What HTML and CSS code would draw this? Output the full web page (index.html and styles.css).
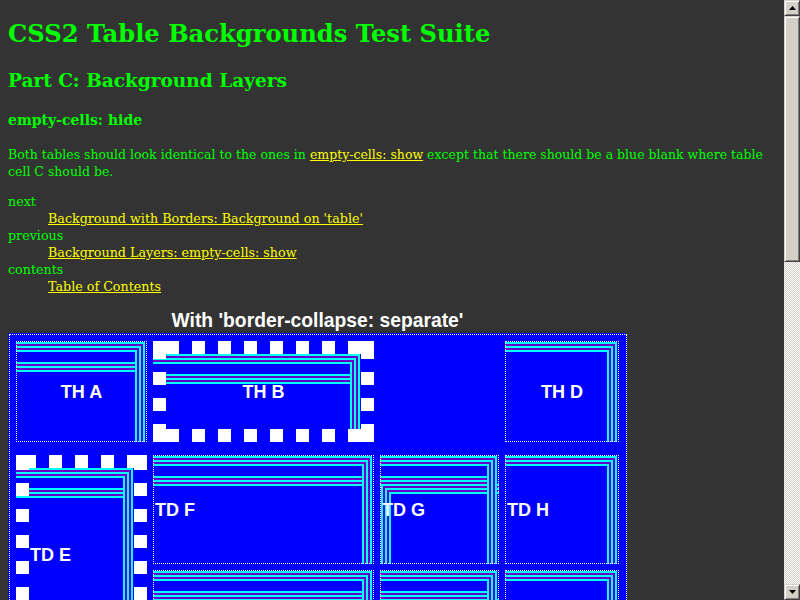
FILE: index.html
```html
<!DOCTYPE html>
<html lang="en">
<head>
<meta charset="utf-8">
<title>CSS2 Table Backgrounds Test Suite: Part C</title>
<link rel="stylesheet" href="styles.css">
</head>
<body>
<div class="page">
  <h1>CSS2 Table Backgrounds Test Suite</h1>
  <h2>Part C: Background Layers</h2>
  <h3>empty-cells: hide</h3>
  <p class="intro">Both tables should look identical to the ones in <a href="#">empty-cells: show</a> except that there should be a blue blank where table cell C should be.</p>
  <dl class="nav">
    <dt>next</dt>
    <dd><a href="#">Background with Borders: Background on 'table'</a></dd>
    <dt>previous</dt>
    <dd><a href="#">Background Layers: empty-cells: show</a></dd>
    <dt>contents</dt>
    <dd><a href="#">Table of Contents</a></dd>
  </dl>
  <div class="tablewrap">
    <div class="caption">With 'border-collapse: separate'</div>
    <div class="grid">
      <div class="cell th thA">TH A</div>
      <div class="cell th thB">TH B</div>
      <div class="cell th empty"></div>
      <div class="cell th thD">TH D</div>
      <div class="cell td tdE">TD E</div>
      <div class="cell td tdF">TD F</div>
      <div class="cell td tdG">TD G</div>
      <div class="cell td tdH">TD H</div>
      <div class="cell td tdI"></div>
      <div class="cell td tdJ"></div>
      <div class="cell td tdK"></div>
    </div>
  </div>
</div>
<div class="scrollbar">
  <div class="sb-btn"><svg width="7" height="4" viewBox="0 0 7 4"><polygon points="3.5,0 7,4 0,4" fill="#000"/></svg></div>
  <div class="sb-thumb"></div>
  <div class="sb-track"></div>
  <div class="sb-btn"><svg width="7" height="4" viewBox="0 0 7 4"><polygon points="0,0 7,0 3.5,4" fill="#000"/></svg></div>
</div>
</body>
</html>
```

FILE: styles.css
```css
:root {
  --m: url("data:image/svg+xml,<svg xmlns='http://www.w3.org/2000/svg' width='600' height='400'><g fill='none' stroke-width='2' shape-rendering='crispEdges'><path d='M0 1H599V400' stroke='cyan'/><path d='M0 3H597V400' stroke='%236600cc'/><path d='M0 5H595V400' stroke='cyan'/><path d='M0 7H593V400' stroke='%236600cc'/><path d='M0 9H591V400' stroke='cyan'/></g></svg>");
  --ml: url("data:image/svg+xml,<svg xmlns='http://www.w3.org/2000/svg' width='600' height='400'><g fill='none' stroke-width='2' shape-rendering='crispEdges'><path d='M1 400V1H600' stroke='cyan'/><path d='M3 400V3H600' stroke='%236600cc'/><path d='M5 400V5H600' stroke='cyan'/><path d='M7 400V7H600' stroke='%236600cc'/><path d='M9 400V9H600' stroke='cyan'/></g></svg>");
  --w: linear-gradient(#fff, #fff);
}

html, body {
  margin: 0;
  height: 600px;
  overflow: hidden;
  background: #333333;
}

body {
  display: flex;
}

.page {
  flex: 1;
  min-width: 0;
  padding: 0 8px;
  color: #00ff00;
  font-family: "DejaVu Serif", serif;
}

h1 {
  margin: 19px 0 0;
  font-size: 24.2px;
  line-height: 30px;
  font-weight: bold;
}

h2 {
  margin: 21px 0 0;
  font-size: 18.5px;
  line-height: 22px;
  font-weight: bold;
}

h3 {
  margin: 20px 0 0;
  font-size: 14px;
  line-height: 17px;
  font-weight: bold;
}

.intro {
  margin: 17px 0 0;
  font-size: 12.5px;
  line-height: 17px;
}

a {
  color: #ffff00;
  text-decoration: underline;
}

.nav {
  margin: 13px 0 0;
  font-size: 12.7px;
  line-height: 17px;
}

.nav dd {
  margin: 0 0 0 40px;
}

.tablewrap {
  width: fit-content;
  margin-top: 15px;
}

.caption {
  text-align: center;
  color: #ffffff;
  font: bold 19.3px/22px "Liberation Sans", Arial, sans-serif;
  margin-bottom: 2px;
}

.grid {
  display: grid;
  grid-template-columns: 131px 221px 119px 114px;
  grid-template-rows: 101px 1px 109px 85px;
  gap: 6px;
  padding: 6px 7px 6px 6px;
  margin-left: 1px;
  border: 1px dotted #ffffff;
  background: #0000ff;
  box-shadow: -1px -1px 0 0 #0000ff;
}

.cell {
  box-sizing: border-box;
  display: flex;
  align-items: center;
  padding: 0 1px;
  border: 1px dotted #ffffff;
  color: #ffffff;
  font: bold 18px/22px "Liberation Sans", Arial, sans-serif;
  background-repeat: no-repeat;
}

.th {
  grid-row: 1;
  justify-content: center;
}

.empty {
  border: none;
}

.td {
  justify-content: flex-start;
}

.thA {
  background:
    var(--m) right 1px top 0 / 600px 400px no-repeat,
    var(--m) right 1px top 20px / 600px 400px no-repeat;
}

.thB {
  border: 13px solid transparent;
  background:
    var(--w) left top / 13px 13px no-repeat border-box,
    var(--w) right top / 13px 13px no-repeat border-box,
    var(--w) left bottom / 13px 13px no-repeat border-box,
    var(--w) right bottom / 13px 13px no-repeat border-box,
    linear-gradient(90deg, transparent 13px, #fff 13px) left 0 top 0 / 26px 13px repeat-x border-box,
    linear-gradient(90deg, transparent 13px, #fff 13px) left 0 bottom 0 / 26px 13px repeat-x border-box,
    linear-gradient(180deg, transparent 5px, #fff 5px 18px, transparent 18px) left 0 top 0 / 13px 26px repeat-y border-box,
    linear-gradient(180deg, transparent 5px, #fff 5px 18px, transparent 18px) right 0 top 0 / 13px 26px repeat-y border-box,
    var(--m) right 1px top 0 / 600px 400px no-repeat padding-box,
    var(--m) right 1px top 20px / 600px 400px no-repeat padding-box;
  background-clip: border-box;
}

.thD {
  background: var(--m) right 1px top 0 / 600px 400px no-repeat;
}

.tdE {
  grid-column: 1;
  grid-row: 3 / span 2;
  padding-left: 1px;
  border: 13px solid transparent;
  background:
    var(--w) left top / 13px 13px no-repeat border-box,
    var(--w) right top / 13px 13px no-repeat border-box,
    linear-gradient(90deg, transparent 7px, #fff 7px 20px, transparent 20px) left 0 top 0 / 26px 13px repeat-x border-box,
    linear-gradient(180deg, transparent 2px, #fff 2px 15px, transparent 15px) left 0 top 0 / 13px 26px repeat-y border-box,
    linear-gradient(180deg, transparent 2px, #fff 2px 15px, transparent 15px) right 0 top 0 / 13px 26px repeat-y border-box,
    var(--m) right 1px top 0 / 600px 400px no-repeat padding-box,
    var(--m) right 1px top 20px / 600px 400px no-repeat padding-box;
  background-clip: border-box;
}

.tdF, .tdI {
  background:
    var(--m) right 1px top 0 / 600px 400px no-repeat,
    var(--m) right 1px top 20px / 600px 400px no-repeat;
}

.tdG, .tdJ {
  background:
    var(--m) right 1px top 0 / 600px 400px no-repeat,
    var(--ml) left 0 top 28px / 600px 400px no-repeat,
    var(--m) right 1px top 20px / 600px 400px no-repeat;
}

.tdH, .tdK {
  background: var(--m) right 1px top 0 / 600px 400px no-repeat;
}

.tdE, .tdF, .tdG, .tdH {
  grid-row-start: 3;
}

.tdI, .tdJ, .tdK {
  grid-row: 4;
}

.tdF, .tdI { grid-column: 2; }
.tdG, .tdJ { grid-column: 3; }
.tdH, .tdK { grid-column: 4; }

/* fake classic scrollbar */
.scrollbar {
  width: 16px;
  flex: none;
  display: flex;
  flex-direction: column;
  background: repeating-conic-gradient(#d4d0c8 0 25%, #ffffff 0 50%) 0 0 / 2px 2px;
}

.sb-btn, .sb-thumb {
  box-sizing: border-box;
  background: #d4d0c8;
  border: 1px solid;
  border-color: #d4d0c8 #404040 #404040 #d4d0c8;
  box-shadow: inset 1px 1px 0 #ffffff, inset -1px -1px 0 #808080;
}

.sb-btn {
  height: 16px;
  flex: none;
  display: flex;
  align-items: center;
  justify-content: center;
}

.sb-btn svg {
  display: block;
}

.sb-thumb {
  height: 246px;
  flex: none;
}

.sb-track {
  flex: 1;
}
```
